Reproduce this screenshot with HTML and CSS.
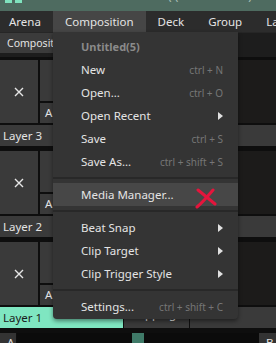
FILE: index.html
```html
<!DOCTYPE html>
<html lang="en">
<head>
  <meta charset="UTF-8" />
  <meta name="viewport" content="width=device-width, initial-scale=1.0" />
  <title>Composition Menu</title>
  <link rel="stylesheet" href="styles.css">
</head>
<body>
  <div class="app">
    <div class="title-strip">
      <span class="mint-bit"></span>
      <span class="mint-bit"></span>
      <span class="title-text">( (</span>
      <span class="title-text end">)</span>
    </div>

    <nav class="menubar">
      <span class="menubar-item">Arena</span>
      <span class="menubar-item active">Composition</span>
      <span class="menubar-item">Deck</span>
      <span class="menubar-item">Group</span>
      <span class="menubar-item">Layer</span>
    </nav>

    <div class="tabbar">
      <span class="tab active">Composition</span>
    </div>

    <div class="layer">
      <div class="layer-row">
        <div class="clip-x">
          <svg width="10" height="10" viewBox="0 0 10 10"><path d="M1 1L9 9M9 1L1 9" /></svg>
        </div>
        <div class="controls">
          <div class="ctrl-top"></div>
          <div class="ctrl-a">A</div>
        </div>
        <div class="slot"></div>
        <div class="slot"></div>
        <div class="slot"></div>
      </div>
      <div class="layer-label">
        <span class="layer-name">Layer 3</span>
        <span class="layer-cell"></span>
        <span class="layer-cell wide"></span>
      </div>
    </div>

    <div class="layer">
      <div class="layer-row">
        <div class="clip-x">
          <svg width="10" height="10" viewBox="0 0 10 10"><path d="M1 1L9 9M9 1L1 9" /></svg>
        </div>
        <div class="controls">
          <div class="ctrl-top"></div>
          <div class="ctrl-a">A</div>
        </div>
        <div class="slot"></div>
        <div class="slot"></div>
        <div class="slot"></div>
      </div>
      <div class="layer-label">
        <span class="layer-name">Layer 2</span>
        <span class="layer-cell"></span>
        <span class="layer-cell wide"></span>
      </div>
    </div>

    <div class="layer">
      <div class="layer-row">
        <div class="clip-x">
          <svg width="10" height="10" viewBox="0 0 10 10"><path d="M1 1L9 9M9 1L1 9" /></svg>
        </div>
        <div class="controls">
          <div class="ctrl-top"></div>
          <div class="ctrl-a">A</div>
        </div>
        <div class="slot"></div>
        <div class="slot"></div>
        <div class="slot"></div>
      </div>
      <div class="layer-label">
        <span class="layer-name selected">Layer 1</span>
        <span class="layer-cell low">Mapping</span>
        <span class="layer-cell wide"></span>
      </div>
    </div>

    <div class="crossfader">
      <span class="fader-end">A</span>
      <div class="fader-track"><span class="fader-handle"></span></div>
      <span class="fader-end">B</span>
    </div>

    <div class="dropdown">
      <div class="dropdown-header">Untitled(5)</div>
      <div class="dropdown-item"><span>New</span><span class="shortcut">ctrl + N</span></div>
      <div class="dropdown-item"><span>Open...</span><span class="shortcut">ctrl + O</span></div>
      <div class="dropdown-item"><span>Open Recent</span><span class="arrow"></span></div>
      <div class="dropdown-item"><span>Save</span><span class="shortcut">ctrl + S</span></div>
      <div class="dropdown-item"><span>Save As...</span><span class="shortcut">ctrl + shift + S</span></div>
      <div class="separator"></div>
      <div class="dropdown-item hover"><span>Media Manager...</span></div>
      <div class="separator"></div>
      <div class="dropdown-item"><span>Beat Snap</span><span class="arrow"></span></div>
      <div class="dropdown-item"><span>Clip Target</span><span class="arrow"></span></div>
      <div class="dropdown-item"><span>Clip Trigger Style</span><span class="arrow"></span></div>
      <div class="separator"></div>
      <div class="dropdown-item"><span>Settings...</span><span class="shortcut">ctrl + shift + C</span></div>
    </div>

    <svg class="red-mark" width="22" height="24" viewBox="0 0 22 24">
      <path d="M3 4C8 8 14 13 20 18" />
      <path d="M18 4C13 10 8 16 2 21" />
    </svg>
  </div>
</body>
</html>
```

FILE: styles.css
```css
body {
  margin: 0;
  background: #0e0e0e;
  font-family: "Noto Sans", "Open Sans", sans-serif;
  font-size: 11.5px;
  color: #e4e4e4;
}
.app {
  position: relative;
  width: 276px;
  height: 343px;
  overflow: hidden;
  background: #0e0e0e;
}

/* top strip */
.title-strip {
  height: 11px;
  background: #4e6b60;
  display: flex;
  align-items: flex-start;
  overflow: hidden;
}
.mint-bit {
  width: 7px;
  height: 3px;
  margin-left: 3px;
  background: #7fe3be;
}
.mint-bit:first-child {
  margin-left: 5px;
}
.title-text {
  margin-left: 146px;
  margin-top: -12px;
  line-height: 16px;
  font-size: 12px;
  color: #a8bdb5;
}
.title-text.end {
  margin-left: 70px;
}

/* menubar */
.menubar {
  height: 21px;
  background: #2c2c2c;
  display: flex;
  margin-left: -3px;
  line-height: 21px;
  white-space: nowrap;
}
.menubar-item {
  padding: 0 12px;
}
.menubar-item.active {
  background: #464646;
}

/* tabs */
.tabbar {
  height: 25px;
  background: #1d1d1d;
  border-top: 1px solid #262626;
  box-sizing: border-box;
}
.tab {
  display: inline-block;
  height: 20px;
  line-height: 20px;
  padding: 0 7px;
  font-size: 10.5px;
  background: #3b3b3b;
}

/* layers */
.layer {
  margin-top: 3px;
}
.layer + .layer {
  margin-top: 5px;
}
.layer-row {
  display: flex;
  gap: 2px;
  height: 63px;
  border-bottom: 2px solid #0e0e0e;
}
.clip-x {
  width: 38px;
  background: #3a3a3a;
  display: flex;
  align-items: center;
  justify-content: center;
}
.clip-x path {
  stroke: #e6e6e6;
  stroke-width: 1.4;
  fill: none;
}
.controls {
  width: 60px;
  display: flex;
  flex-direction: column;
  gap: 2px;
}
.ctrl-top {
  flex: 1;
  background: #3a3a3a;
}
.ctrl-a {
  height: 20px;
  line-height: 20px;
  padding-left: 5px;
  background: #3a3a3a;
}
.slot {
  flex: 1;
  background: #1c1b1a;
}
.layer-label {
  display: flex;
  height: 21px;
  background: #3a3a3a;
  line-height: 21px;
}
.layer-name {
  width: 120px;
  padding-left: 3px;
}
.layer-name.selected {
  background: #7fe6c1;
  color: #1b1b1b;
}
.layer-cell {
  width: 66px;
  border-left: 1px solid #0e0e0e;
  padding-left: 4px;
  box-sizing: border-box;
}
.layer-cell.low {
  line-height: 14px;
}
.layer-cell.wide {
  flex: 1;
}

/* crossfader */
.crossfader {
  display: flex;
  height: 20px;
  margin-top: 5px;
}
.fader-end {
  width: 16px;
  background: #333;
  padding-left: 7px;
  box-sizing: border-box;
  line-height: 20px;
}
.fader-end:last-child {
  width: 17px;
}
.fader-track {
  flex: 1;
  background: #0b0b0b;
  margin-left: 1px;
}
.fader-handle {
  display: block;
  width: 12px;
  height: 20px;
  margin-left: 115px;
  background: #3f7a68;
}

/* dropdown menu */
.dropdown {
  position: absolute;
  left: 53px;
  top: 32px;
  width: 185px;
  padding: 3px 0 1px;
  background: #343434;
  border-radius: 0 0 4px 4px;
  box-shadow: 0 2px 4px rgba(0, 0, 0, 0.45);
}
.dropdown-header {
  height: 23px;
  line-height: 23px;
  padding-left: 28px;
  font-size: 11px;
  font-weight: 700;
  color: #8a8a8a;
}
.dropdown-item {
  display: flex;
  justify-content: space-between;
  align-items: center;
  height: 23px;
  padding: 0 15px 0 28px;
  white-space: nowrap;
}
.dropdown-item.hover {
  background: #474747;
}
.shortcut {
  font-size: 10px;
  color: #767676;
}
.arrow {
  width: 0;
  height: 0;
  border-top: 4px solid transparent;
  border-bottom: 4px solid transparent;
  border-left: 5px solid #e0e0e0;
}
.separator {
  height: 2px;
  margin: 4px 0;
  background: #282828;
}

.red-mark {
  position: absolute;
  left: 195px;
  top: 186px;
}
.red-mark path {
  stroke: #e5153c;
  stroke-width: 3;
  stroke-linecap: round;
  fill: none;
}
```
